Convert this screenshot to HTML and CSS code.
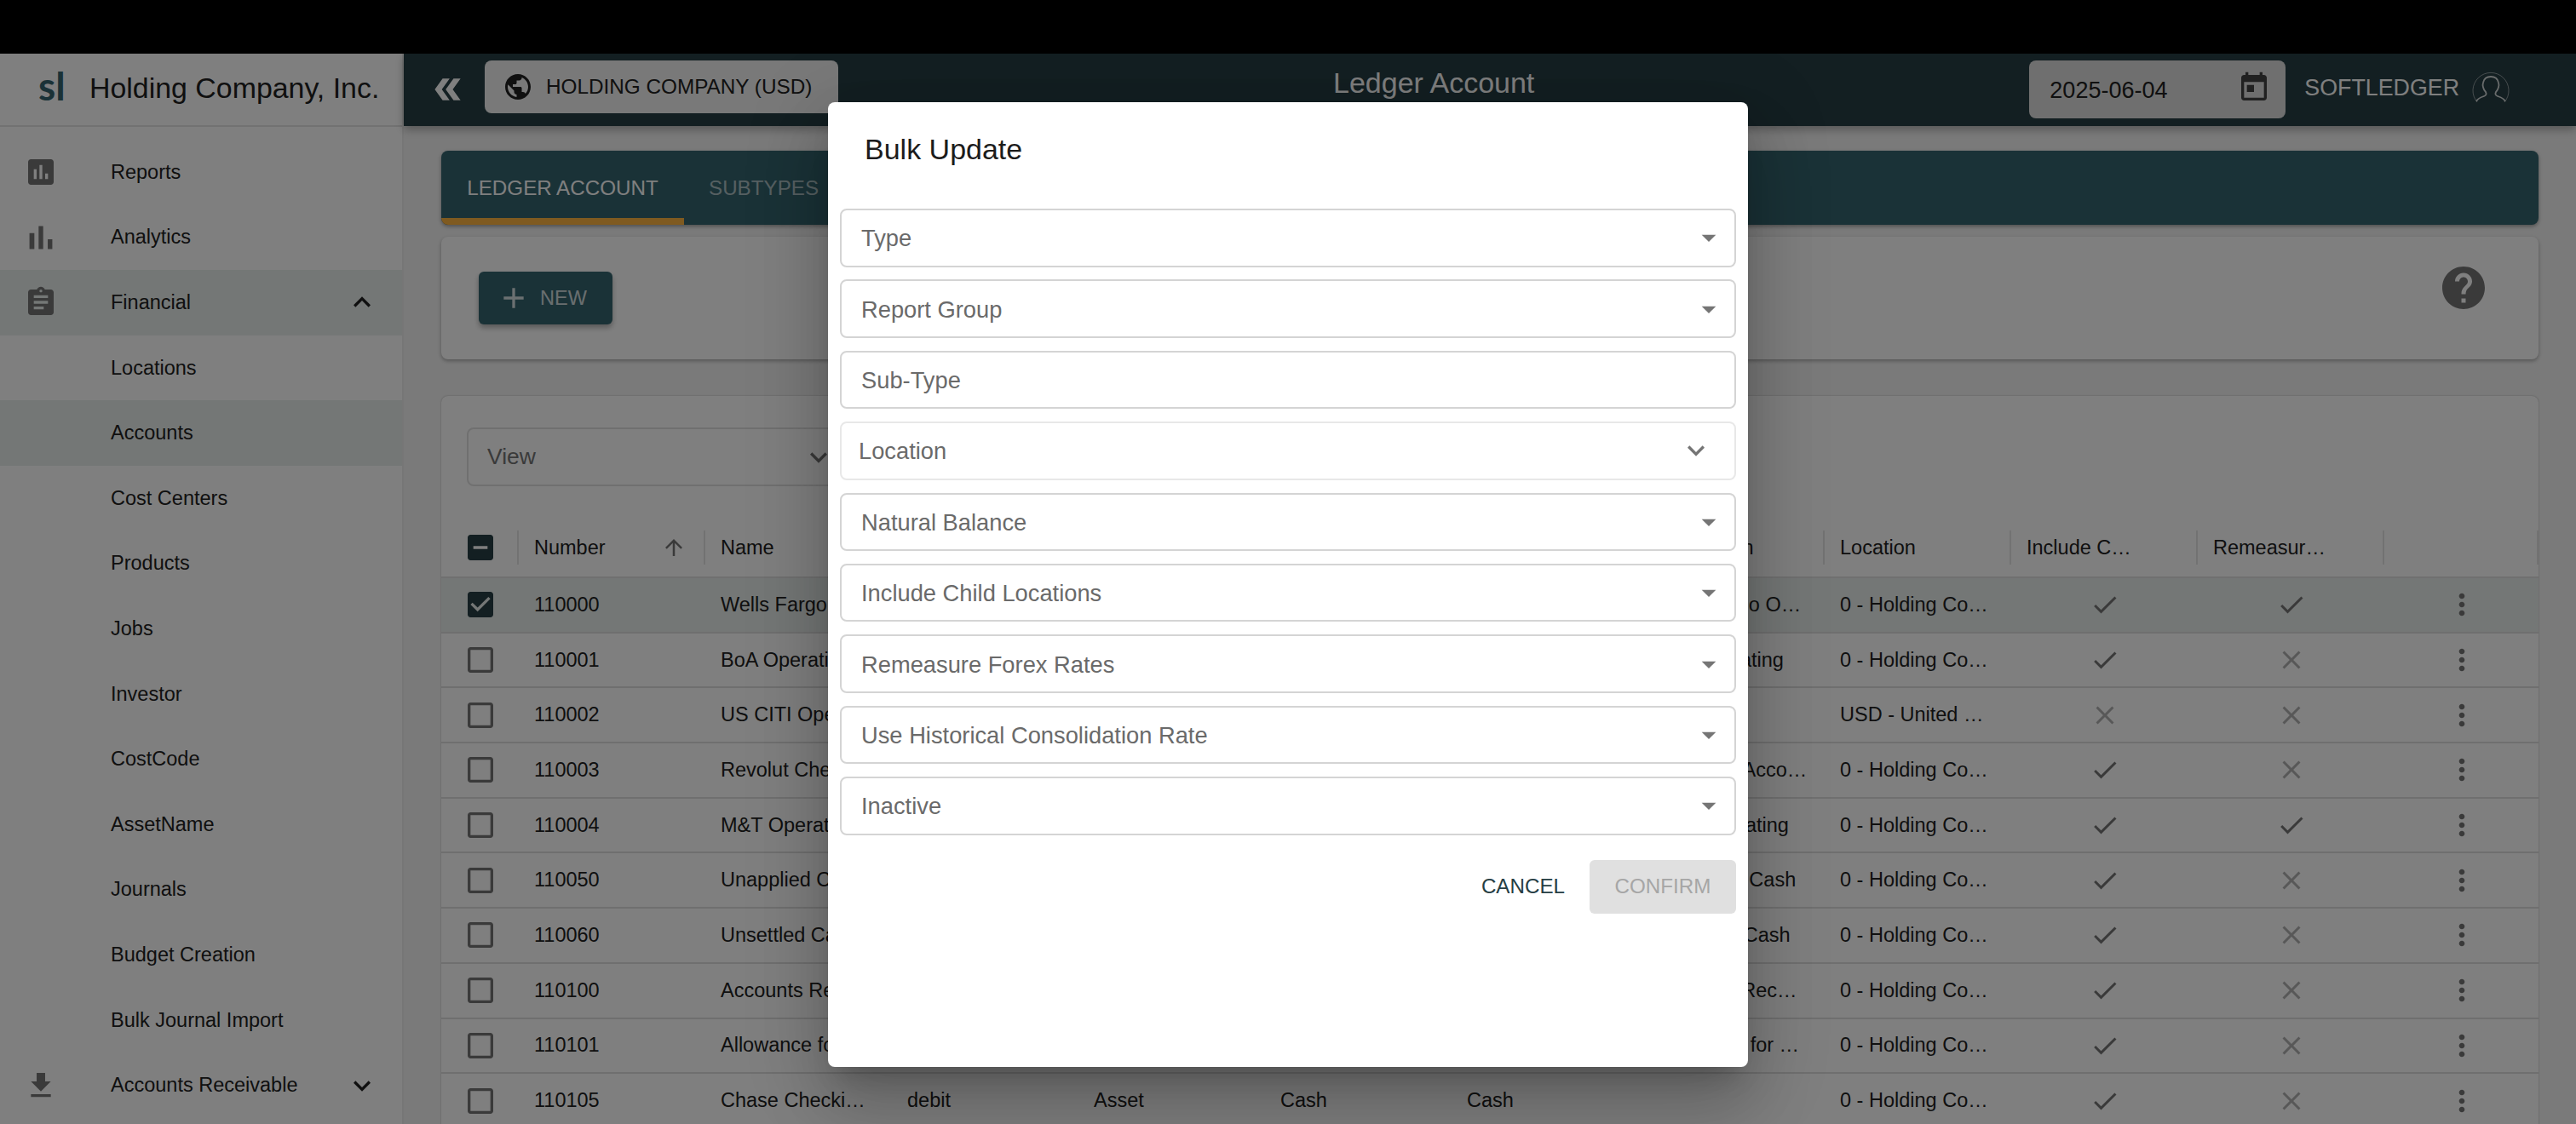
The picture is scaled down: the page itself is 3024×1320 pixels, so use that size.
FILE: index.html
```html
<!DOCTYPE html>
<html lang="en">

<head>
  <meta charset="UTF-8">
  <title>Ledger Account</title>
  <link rel="stylesheet" href="styles.css">
</head>

<body>
  <!-- Icon sprite -->
  <svg class="sprite" xmlns="http://www.w3.org/2000/svg">
    <symbol id="i-reports" viewBox="0 0 24 24"><path d="M19 3H5c-1.1 0-2 .9-2 2v14c0 1.1.9 2 2 2h14c1.1 0 2-.9 2-2V5c0-1.1-.9-2-2-2zM9 17H7v-7h2v7zm4 0h-2V7h2v10zm4 0h-2v-4h2v4z"/></symbol>
    <symbol id="i-bars" viewBox="0 0 24 24"><path d="M5 9.2h3V19H5zM10.6 5h2.8v14h-2.8zm5.6 8H19v6h-2.8z"/></symbol>
    <symbol id="i-clipboard" viewBox="0 0 24 24"><path d="M19 3h-4.18C14.4 1.84 13.3 1 12 1c-1.3 0-2.4.84-2.82 2H5c-1.1 0-2 .9-2 2v14c0 1.1.9 2 2 2h14c1.1 0 2-.9 2-2V5c0-1.1-.9-2-2-2zm-7 0c.55 0 1 .45 1 1s-.45 1-1 1-1-.45-1-1 .45-1 1-1zm2 14H7v-2h7v2zm3-4H7v-2h10v2zm0-4H7V7h10v2z"/></symbol>
    <symbol id="i-download" viewBox="0 0 24 24"><path d="M19 9h-4V3H9v6H5l7 7 7-7zM5 18v2h14v-2H5z"/></symbol>
    <symbol id="i-less" viewBox="0 0 24 24"><path d="M12 8l-6 6 1.41 1.41L12 10.83l4.59 4.58L18 14z"/></symbol>
    <symbol id="i-more" viewBox="0 0 24 24"><path d="M16.59 8.59L12 13.17 7.41 8.59 6 10l6 6 6-6z"/></symbol>
    <symbol id="i-collapse" viewBox="0 0 24 24"><path d="M8.5 5H13l-5 7 5 7H8.5l-5-7zM15.5 5H20l-5 7 5 7h-4.5l-5-7z"/></symbol>
    <symbol id="i-globe" viewBox="0 0 24 24"><path d="M12 2C6.48 2 2 6.48 2 12s4.48 10 10 10 10-4.48 10-10S17.52 2 12 2zm-1 17.93c-3.95-.49-7-3.85-7-7.93 0-.62.08-1.21.21-1.79L9 15v1c0 1.1.9 2 2 2v1.93zm6.9-2.54c-.26-.81-1-1.39-1.9-1.39h-1v-3c0-.55-.45-1-1-1H8v-2h2c.55 0 1-.45 1-1V7h2c1.1 0 2-.9 2-2v-.41c2.93 1.19 5 4.06 5 7.41 0 2.08-.8 3.97-2.1 5.39z"/></symbol>
    <symbol id="i-today" viewBox="0 0 24 24"><path d="M19 3h-1V1h-2v2H8V1H6v2H5c-1.11 0-1.99.9-1.99 2L3 19c0 1.1.89 2 2 2h14c1.1 0 2-.9 2-2V5c0-1.1-.9-2-2-2zm0 16H5V8h14v11zM7 10h5v5H7z"/></symbol>
    <symbol id="i-help" viewBox="0 0 24 24"><path d="M12 2C6.48 2 2 6.48 2 12s4.48 10 10 10 10-4.48 10-10S17.52 2 12 2zm1 17h-2v-2h2v2zm2.07-7.75l-.9.92C13.45 12.9 13 13.5 13 15h-2v-.5c0-1.1.45-2.1 1.17-2.83l1.24-1.26c.37-.36.59-.86.59-1.41 0-1.1-.9-2-2-2s-2 .9-2 2H8c0-2.21 1.79-4 4-4s4 1.79 4 4c0 .88-.36 1.68-.93 2.25z"/></symbol>
    <symbol id="i-add" viewBox="0 0 24 24"><path d="M19 13h-6v6h-2v-6H5v-2h6V5h2v6h6v2z"/></symbol>
    <symbol id="i-box" viewBox="0 0 24 24"><path d="M19 5v14H5V5h14m0-2H5c-1.1 0-2 .9-2 2v14c0 1.1.9 2 2 2h14c1.1 0 2-.9 2-2V5c0-1.1-.9-2-2-2z"/></symbol>
    <symbol id="i-boxed" viewBox="0 0 24 24"><path d="M19 3H5c-1.11 0-2 .9-2 2v14c0 1.1.89 2 2 2h14c1.11 0 2-.89 2-2V5c0-1.1-.89-2-2-2zm-9 14l-5-5 1.41-1.41L10 14.17l7.59-7.59L19 8l-9 9z"/></symbol>
    <symbol id="i-minus" viewBox="0 0 24 24"><path d="M19 3H5c-1.1 0-2 .9-2 2v14c0 1.1.9 2 2 2h14c1.1 0 2-.9 2-2V5c0-1.1-.9-2-2-2zm-2 10H7v-2h10v2z"/></symbol>
    <symbol id="i-check" viewBox="0 0 24 24"><path d="M9 16.17L4.83 12l-1.42 1.41L9 19 21 7l-1.41-1.41z"/></symbol>
    <symbol id="i-close" viewBox="0 0 24 24"><path d="M19 6.41L17.59 5 12 10.59 6.41 5 5 6.41 10.59 12 5 17.59 6.41 19 12 13.41 17.59 19 19 17.59 13.41 12z"/></symbol>
    <symbol id="i-dots" viewBox="0 0 24 24"><path d="M12 8c1.1 0 2-.9 2-2s-.9-2-2-2-2 .9-2 2 .9 2 2 2zm0 2c-1.1 0-2 .9-2 2s.9 2 2 2 2-.9 2-2-.9-2-2-2zm0 6c-1.1 0-2 .9-2 2s.9 2 2 2 2-.9 2-2-.9-2-2-2z"/></symbol>
    <symbol id="i-up" viewBox="0 0 24 24"><path d="M4 12l1.41 1.41L11 7.83V20h2V7.83l5.58 5.59L20 12l-8-8-8 8z"/></symbol>
    <symbol id="i-drop" viewBox="0 0 24 24"><path d="M7 10l5 5 5-5z"/></symbol>
  </svg>

  <div class="top-strip"></div>

  <div class="app">
    <!-- Sidebar -->
    <aside class="sidebar">
      <div class="brand">
        <span class="brand-logo">sl</span>
        <span class="brand-name">Holding Company, Inc.</span>
      </div>
      <nav class="menu">
        <div class="menu-item"><svg class="icon menu-icon"><use href="#i-reports"/></svg>Reports</div>
        <div class="menu-item"><svg class="icon menu-icon big"><use href="#i-bars"/></svg>Analytics</div>
        <div class="menu-item active"><svg class="icon menu-icon"><use href="#i-clipboard"/></svg>Financial<svg class="icon menu-caret"><use href="#i-less"/></svg></div>
        <div class="menu-item">Locations</div>
        <div class="menu-item active">Accounts</div>
        <div class="menu-item">Cost Centers</div>
        <div class="menu-item">Products</div>
        <div class="menu-item">Jobs</div>
        <div class="menu-item">Investor</div>
        <div class="menu-item">CostCode</div>
        <div class="menu-item">AssetName</div>
        <div class="menu-item">Journals</div>
        <div class="menu-item">Budget Creation</div>
        <div class="menu-item">Bulk Journal Import</div>
        <div class="menu-item"><svg class="icon menu-icon"><use href="#i-download"/></svg>Accounts Receivable<svg class="icon menu-caret"><use href="#i-more"/></svg></div>
      </nav>
    </aside>

    <div class="main">
      <!-- Top bar -->
      <header class="topbar">
        <svg class="icon collapse-icon"><use href="#i-collapse"/></svg>
        <div class="company-btn"><svg class="icon"><use href="#i-globe"/></svg>HOLDING COMPANY (USD)</div>
        <div class="page-title">Ledger Account</div>
        <div class="date-field">2025-06-04<svg class="icon"><use href="#i-today"/></svg></div>
        <div class="user-name">SOFTLEDGER</div>
        <svg class="user-icon" viewBox="0 0 44 37">
          <path class="user-ring" d="M6 36A21 21 0 1 1 38 36"/>
          <path d="M5 35c2-4 6-5 9-6 3-1 3-3 2-5-3-3-4-8-3-11 1-5 5-7 9-7s8 2 9 7c1 3 0 8-3 11-1 2-1 4 2 5 3 1 7 2 9 6"/>
        </svg>
      </header>

      <div class="content">
        <!-- Tabs -->
        <div class="tabs">
          <div class="tab selected">LEDGER ACCOUNT</div>
          <div class="tab">SUBTYPES</div>
        </div>

        <div class="card toolbar">
          <div class="new-btn"><svg class="icon"><use href="#i-add"/></svg>NEW</div>
          <svg class="icon help-icon"><use href="#i-help"/></svg>
        </div>

        <!-- Accounts table -->
        <div class="card table-card">
          <div class="view-select">View<svg class="icon"><use href="#i-more"/></svg></div>
          <div class="grid-head">
            <div class="cell box-cell"><svg class="icon box-on"><use href="#i-minus"/></svg></div>
            <div class="cell">Number<svg class="icon sort-icon"><use href="#i-up"/></svg></div>
            <div class="cell">Name</div>
            <div class="cell"></div>
            <div class="cell"></div>
            <div class="cell"></div>
            <div class="cell"></div>
            <div class="cell">Description</div>
            <div class="cell">Location</div>
            <div class="cell short">Include Child Locations</div>
            <div class="cell short">Remeasure Forex Rates</div>
            <div class="cell"></div>
          </div>

          <div class="grid-row selected">
            <div class="cell box-cell"><svg class="icon box-on"><use href="#i-boxed"/></svg></div>
            <div class="cell">110000</div><div class="cell">Wells Fargo Operating</div>
            <div class="cell"></div><div class="cell"></div><div class="cell"></div><div class="cell"></div>
            <div class="cell">Wells Fargo Operating</div><div class="cell">0 - Holding Company</div>
            <div class="cell mid"><svg class="icon yes"><use href="#i-check"/></svg></div>
            <div class="cell mid"><svg class="icon yes"><use href="#i-check"/></svg></div>
            <div class="cell mid"><svg class="icon dots"><use href="#i-dots"/></svg></div>
          </div>
          <div class="grid-row">
            <div class="cell box-cell"><svg class="icon box-off"><use href="#i-box"/></svg></div>
            <div class="cell">110001</div><div class="cell">BoA Operating</div>
            <div class="cell"></div><div class="cell"></div><div class="cell"></div><div class="cell"></div>
            <div class="cell">BoA Operating</div><div class="cell">0 - Holding Company</div>
            <div class="cell mid"><svg class="icon yes"><use href="#i-check"/></svg></div>
            <div class="cell mid"><svg class="icon no"><use href="#i-close"/></svg></div>
            <div class="cell mid"><svg class="icon dots"><use href="#i-dots"/></svg></div>
          </div>
          <div class="grid-row">
            <div class="cell box-cell"><svg class="icon box-off"><use href="#i-box"/></svg></div>
            <div class="cell">110002</div><div class="cell">US CITI Operating</div>
            <div class="cell"></div><div class="cell"></div><div class="cell"></div><div class="cell"></div>
            <div class="cell"></div><div class="cell">USD - United States</div>
            <div class="cell mid"><svg class="icon no"><use href="#i-close"/></svg></div>
            <div class="cell mid"><svg class="icon no"><use href="#i-close"/></svg></div>
            <div class="cell mid"><svg class="icon dots"><use href="#i-dots"/></svg></div>
          </div>
          <div class="grid-row">
            <div class="cell box-cell"><svg class="icon box-off"><use href="#i-box"/></svg></div>
            <div class="cell">110003</div><div class="cell">Revolut Checking</div>
            <div class="cell"></div><div class="cell"></div><div class="cell"></div><div class="cell"></div>
            <div class="cell wide">Revolut – Account</div><div class="cell">0 - Holding Company</div>
            <div class="cell mid"><svg class="icon yes"><use href="#i-check"/></svg></div>
            <div class="cell mid"><svg class="icon no"><use href="#i-close"/></svg></div>
            <div class="cell mid"><svg class="icon dots"><use href="#i-dots"/></svg></div>
          </div>
          <div class="grid-row">
            <div class="cell box-cell"><svg class="icon box-off"><use href="#i-box"/></svg></div>
            <div class="cell">110004</div><div class="cell">M&amp;T Operating</div>
            <div class="cell"></div><div class="cell"></div><div class="cell"></div><div class="cell"></div>
            <div class="cell">M&amp;T Operating</div><div class="cell">0 - Holding Company</div>
            <div class="cell mid"><svg class="icon yes"><use href="#i-check"/></svg></div>
            <div class="cell mid"><svg class="icon yes"><use href="#i-check"/></svg></div>
            <div class="cell mid"><svg class="icon dots"><use href="#i-dots"/></svg></div>
          </div>
          <div class="grid-row">
            <div class="cell box-cell"><svg class="icon box-off"><use href="#i-box"/></svg></div>
            <div class="cell">110050</div><div class="cell">Unapplied Cash</div>
            <div class="cell"></div><div class="cell"></div><div class="cell"></div><div class="cell"></div>
            <div class="cell">Unapplied Cash</div><div class="cell">0 - Holding Company</div>
            <div class="cell mid"><svg class="icon yes"><use href="#i-check"/></svg></div>
            <div class="cell mid"><svg class="icon no"><use href="#i-close"/></svg></div>
            <div class="cell mid"><svg class="icon dots"><use href="#i-dots"/></svg></div>
          </div>
          <div class="grid-row">
            <div class="cell box-cell"><svg class="icon box-off"><use href="#i-box"/></svg></div>
            <div class="cell">110060</div><div class="cell">Unsettled Cash</div>
            <div class="cell"></div><div class="cell"></div><div class="cell"></div><div class="cell"></div>
            <div class="cell">Unsettled Cash</div><div class="cell">0 - Holding Company</div>
            <div class="cell mid"><svg class="icon yes"><use href="#i-check"/></svg></div>
            <div class="cell mid"><svg class="icon no"><use href="#i-close"/></svg></div>
            <div class="cell mid"><svg class="icon dots"><use href="#i-dots"/></svg></div>
          </div>
          <div class="grid-row">
            <div class="cell box-cell"><svg class="icon box-off"><use href="#i-box"/></svg></div>
            <div class="cell">110100</div><div class="cell">Accounts Receivable</div>
            <div class="cell"></div><div class="cell"></div><div class="cell"></div><div class="cell"></div>
            <div class="cell">Accounts Receivable</div><div class="cell">0 - Holding Company</div>
            <div class="cell mid"><svg class="icon yes"><use href="#i-check"/></svg></div>
            <div class="cell mid"><svg class="icon no"><use href="#i-close"/></svg></div>
            <div class="cell mid"><svg class="icon dots"><use href="#i-dots"/></svg></div>
          </div>
          <div class="grid-row">
            <div class="cell box-cell"><svg class="icon box-off"><use href="#i-box"/></svg></div>
            <div class="cell">110101</div><div class="cell">Allowance for Doubtful Accounts</div>
            <div class="cell"></div><div class="cell"></div><div class="cell"></div><div class="cell"></div>
            <div class="cell">Allowance for Doubtful Accounts</div><div class="cell">0 - Holding Company</div>
            <div class="cell mid"><svg class="icon yes"><use href="#i-check"/></svg></div>
            <div class="cell mid"><svg class="icon no"><use href="#i-close"/></svg></div>
            <div class="cell mid"><svg class="icon dots"><use href="#i-dots"/></svg></div>
          </div>
          <div class="grid-row">
            <div class="cell box-cell"><svg class="icon box-off"><use href="#i-box"/></svg></div>
            <div class="cell">110105</div><div class="cell">Chase Checking Account</div>
            <div class="cell">debit</div><div class="cell">Asset</div><div class="cell">Cash</div><div class="cell">Cash</div>
            <div class="cell"></div><div class="cell">0 - Holding Company</div>
            <div class="cell mid"><svg class="icon yes"><use href="#i-check"/></svg></div>
            <div class="cell mid"><svg class="icon no"><use href="#i-close"/></svg></div>
            <div class="cell mid"><svg class="icon dots"><use href="#i-dots"/></svg></div>
          </div>
        </div>
      </div>
    </div>
  </div>

  <!-- Bulk Update dialog -->
  <div class="overlay">
    <div class="modal">
      <h2 class="modal-title">Bulk Update</h2>
      <div class="fields">
        <div class="field">Type<svg class="icon"><use href="#i-drop"/></svg></div>
        <div class="field">Report Group<svg class="icon"><use href="#i-drop"/></svg></div>
        <div class="field">Sub-Type</div>
        <div class="field plain-select">Location<svg class="icon"><use href="#i-more"/></svg></div>
        <div class="field">Natural Balance<svg class="icon"><use href="#i-drop"/></svg></div>
        <div class="field">Include Child Locations<svg class="icon"><use href="#i-drop"/></svg></div>
        <div class="field">Remeasure Forex Rates<svg class="icon"><use href="#i-drop"/></svg></div>
        <div class="field">Use Historical Consolidation Rate<svg class="icon"><use href="#i-drop"/></svg></div>
        <div class="field">Inactive<svg class="icon"><use href="#i-drop"/></svg></div>
      </div>
      <div class="modal-actions">
        <div class="cancel-btn">CANCEL</div>
        <div class="confirm-btn">CONFIRM</div>
      </div>
    </div>
  </div>
</body>

</html>
```

FILE: styles.css
```css
* {
  box-sizing: border-box;
}

html,
body {
  margin: 0;
  height: 1320px;
  overflow: hidden;
}

body {
  position: relative;
  display: flex;
  flex-direction: column;
  font-family: "Liberation Sans", Arial, sans-serif;
  font-size: 23.5px;
  color: #212121;
  background: #000;
}

.sprite {
  display: none;
}

.icon {
  width: 40px;
  height: 40px;
  flex: none;
  fill: currentColor;
}

.top-strip {
  height: 63px;
  flex: none;
  background: #000;
}

.app {
  flex: 1;
  min-height: 0;
  display: flex;
  background: #f4f4f4;
}

/* Sidebar */
.sidebar {
  width: 474px;
  flex: none;
  background: #fff;
  border-right: 2px solid #ececec;
}

.brand {
  height: 86px;
  display: flex;
  align-items: center;
  border-bottom: 2px solid #e4e4e4;
}

.brand-logo {
  width: 105px;
  padding-left: 45px;
  font-family: Lato, sans-serif;
  font-size: 46px;
  font-weight: 700;
  color: #34646e;
  line-height: 1;
  margin-top: -8px;
}

.brand-name {
  font-size: 33.9px;
  margin-top: -4px;
}

.menu {
  padding-top: 15px;
}

.menu-item {
  position: relative;
  height: 76.6px;
  display: flex;
  align-items: center;
  padding-left: 130px;
}

.menu-item.active {
  background: #e8eeec;
}

.menu-icon {
  position: absolute;
  left: 28px;
  color: #757575;
}

.menu-icon.big {
  left: 25px;
  width: 46px;
  height: 46px;
}

.menu-caret {
  position: absolute;
  left: 405px;
}

/* Top bar */
.main {
  flex: 1;
  min-width: 0;
  display: flex;
  flex-direction: column;
}

.topbar {
  height: 85px;
  flex: none;
  display: flex;
  align-items: flex-start;
  padding-top: 8px;
  background: #263e44;
  box-shadow: 0 4px 10px rgba(0, 0, 0, 0.3);
  position: relative;
}

.collapse-icon {
  width: 44px;
  height: 44px;
  margin: 12px 21.5px 0 29.5px;
  color: #fff;
}

.company-btn {
  width: 415px;
  height: 62px;
  display: flex;
  align-items: center;
  gap: 15px;
  padding-left: 21px;
  background: #f2f2f2;
  border-radius: 8px;
  font-size: 24.3px;
}

.company-btn .icon {
  width: 36px;
  height: 36px;
}

.page-title {
  flex: 1;
  text-align: center;
  font-size: 34px;
  line-height: 48px;
  padding-top: 2px;
  color: #fff;
}

.date-field {
  width: 301px;
  height: 68px;
  display: flex;
  align-items: center;
  justify-content: space-between;
  padding: 3px 17px 0 24px;
  background: #dedede;
  border-radius: 8px;
  font-size: 27px;
}

.date-field .icon {
  color: #424242;
  margin-top: -7px;
}

.user-name {
  margin: 8px 0 0 22px;
  line-height: 48px;
  font-size: 26.8px;
  color: #fff;
}

.user-icon {
  width: 44px;
  height: 37px;
  margin: 13px 78px 0 15px;
  fill: none;
  stroke: #fff;
  stroke-width: 1.8;
  opacity: 0.8;
}

.user-ring {
  stroke-width: 1;
  opacity: 0.6;
}

/* Content */
.content {
  flex: 1;
  min-height: 0;
  padding: 29px 44px 0;
  overflow: hidden;
}

.tabs {
  height: 87px;
  display: flex;
  background: #34646e;
  border-radius: 8px;
  box-shadow: 0 2px 4px rgba(0, 0, 0, 0.35);
  overflow: hidden;
}

.tab {
  display: flex;
  align-items: center;
  justify-content: center;
  padding: 0 29px;
  color: rgba(255, 255, 255, 0.6);
  font-size: 24.2px;
}

.tab.selected {
  width: 285px;
  color: #fff;
  box-shadow: inset 0 -8px 0 #ffb440;
}

.card {
  background: #fff;
  border-radius: 8px;
  box-shadow: 0 2px 4px rgba(0, 0, 0, 0.3);
}

.toolbar {
  height: 144px;
  margin-top: 14px;
  display: flex;
  align-items: center;
  justify-content: space-between;
  padding: 0 58px 0 44px;
}

.new-btn {
  width: 157px;
  height: 62px;
  display: flex;
  align-items: center;
  gap: 11px;
  padding-left: 21px;
  background: #34646e;
  border-radius: 6px;
  box-shadow: 0 4px 6px rgba(0, 0, 0, 0.3);
  color: rgba(255, 255, 255, 0.8);
}

.help-icon {
  width: 60px;
  height: 60px;
  color: #757575;
  margin-bottom: 24px;
}

.table-card {
  margin-top: 43px;
  padding-top: 37px;
  height: 900px;
  box-shadow: 0 0 2px rgba(0, 0, 0, 0.3);
}

.view-select {
  width: 435px;
  height: 69px;
  margin-left: 30px;
  display: flex;
  align-items: center;
  justify-content: space-between;
  padding: 0 0 0 22px;
  border: 2px solid #e0e0e0;
  border-radius: 8px;
  font-size: 26.5px;
  color: #757575;
}

.grid-head,
.grid-row {
  display: grid;
  grid-template-columns: 91px repeat(10, 219px) 181px;
  align-items: center;
}

.grid-head {
  height: 70px;
  margin-top: 38px;
  border-bottom: 2px solid #e0e0e0;
}

.grid-head .cell {
  display: block;
  position: relative;
  height: 40px;
  line-height: 40px;
  border-right: 2px solid #e4e4e4;
}

.grid-head .cell.short {
  padding-right: 66px;
}

.grid-row {
  height: 64.7px;
  border-bottom: 2px solid #dedede;
}

.grid-row.selected {
  background: #e8eeec;
}

.cell {
  min-width: 0;
  padding: 0 22px 0 18px;
  overflow: hidden;
  white-space: nowrap;
  text-overflow: ellipsis;
}

.cell.wide {
  padding-right: 16px;
}

.box-cell,
.grid-head .box-cell {
  padding: 0 0 0 26px;
  line-height: 0;
}

.box-on {
  color: #263e44;
}

.box-off {
  color: #757575;
}

.sort-icon {
  position: absolute;
  right: 20px;
  top: 5px;
  width: 30px;
  height: 30px;
  color: #757575;
}

.mid {
  display: flex;
  justify-content: center;
  padding: 0;
}

.yes {
  width: 36px;
  height: 36px;
  color: #757575;
}

.no {
  width: 36px;
  height: 36px;
  color: #b0b0b0;
}

.dots {
  color: #757575;
}

/* Dialog */
.overlay {
  position: absolute;
  inset: 0;
  display: flex;
  justify-content: center;
  align-items: flex-start;
  padding-top: 120px;
  background: rgba(0, 0, 0, 0.5);
}

.modal {
  width: 1080px;
  height: 1133px;
  padding: 0 14px;
  background: #fff;
  border-radius: 8px;
  box-shadow: 0 22px 30px -14px rgba(0, 0, 0, 0.2), 0 48px 76px 6px rgba(0, 0, 0, 0.14), 0 18px 92px 16px rgba(0, 0, 0, 0.12);
}

.modal-title {
  margin: 0;
  height: 125px;
  padding: 31px 0 0 29px;
  font-size: 34px;
  line-height: 48px;
  font-weight: 400;
  color: #1c1c1c;
}

.fields {
  display: grid;
  grid-auto-rows: 68.5px;
  row-gap: 14.9px;
}

.field {
  display: flex;
  align-items: center;
  justify-content: space-between;
  padding: 2px 10px 0 23px;
  border: 2px solid #d4d4d4;
  border-radius: 8px;
  font-size: 27.3px;
  color: #6a6a6a;
}

.field .icon {
  color: #757575;
  margin-top: -2px;
}

.field.plain-select {
  padding: 2px 25px 0 20px;
  border-color: #e8e8e8;
}

.modal-actions {
  display: flex;
  justify-content: flex-end;
  align-items: center;
  gap: 29px;
  margin-top: 29px;
  font-size: 24.2px;
}

.cancel-btn {
  color: #263e44;
}

.confirm-btn {
  width: 172px;
  height: 63px;
  display: flex;
  align-items: center;
  justify-content: center;
  background: #e0e0e0;
  border-radius: 6px;
  color: #a6a6a6;
}
```
